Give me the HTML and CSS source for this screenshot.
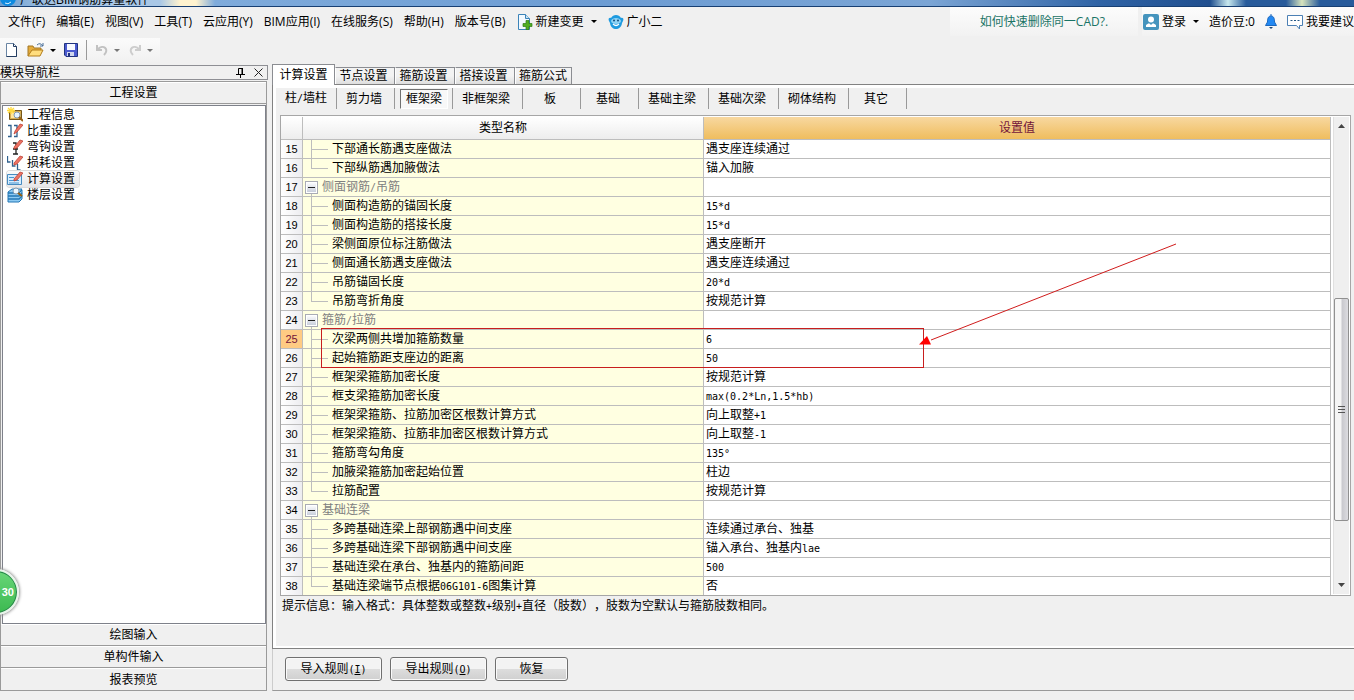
FILE: index.html
```html
<!DOCTYPE html>
<html lang="zh-CN">
<head>
<meta charset="utf-8">
<title>工程设置</title>
<link rel="stylesheet" href="styles.css">
</head>
<body>
<div class="titlebar">
  <svg class="app-icon" width="16" height="16" viewBox="0 0 16 16"><circle cx="8" cy="8" r="8" fill="#0d8ae0"/><path d="M5 13q3 2 6-1" stroke="#d5efff" fill="none"/></svg>
  <span class="title-text">广联达BIM钢筋算量软件</span>
</div>
<header class="menubar">
  <nav class="menus">
    <button>文件(F)</button><button>编辑(E)</button><button>视图(V)</button><button>工具(T)</button><button>云应用(Y)</button><button>BIM应用(I)</button><button>在线服务(S)</button><button>帮助(H)</button><button>版本号(B)</button>
    <button class="with-icon">
      <svg width="16" height="16" viewBox="0 0 16 16"><path d="M1.500.5h7l4 4v11h-11z" fill="#f2f9ff" stroke="#3b83b8"/><path d="M8.500.5v4h4" fill="#c8e2f4" stroke="#3b83b8"/><path d="M9 6.500h3v3h3v3h-3v3H9v-3H6v-3h3z" fill="#50ad22" stroke="#2d7d16" stroke-width=".7"/></svg>新建变更<i class="caret"></i>
    </button>
    <button class="with-icon">
      <svg width="16" height="16" viewBox="0 0 16 16"><path d="M3 4C1 3 0 5 1 7l1 2c1 8 11 8 12 0l1-2c1-2 0-4-2-3C11 0 5 0 3 4z" fill="#1f9be0"/><ellipse cx="8" cy="7" rx="5" ry="3" fill="#8ed3f5"/><circle cx="6" cy="6.500" r="1" fill="#124b7d"/><circle cx="10" cy="6.500" r="1" fill="#124b7d"/><path d="M5 10q3 3 6 0" fill="none" stroke="#fff" stroke-width="1.200"/></svg>广小二
    </button>
  </nav>
  <a class="tip-link" href="#">如何快速删除同一CAD?.</a>
  <div class="account">
    <button class="with-icon"><svg width="16" height="16" viewBox="0 0 16 16"><rect width="16" height="16" rx="2" fill="#4594bd"/><circle cx="8" cy="5.500" r="3" fill="#fff"/><path d="M3 13v-2q2-2 5-2t5 2v2z" fill="#fff"/><path d="M6 9l2 2 2-2" fill="#4594bd"/></svg>登录<i class="caret"></i></button>
    <span>造价豆:0</span>
    <button class="with-icon bell" aria-label="通知"><svg width="12" height="16" viewBox="0 0 12 16"><path d="M6 0v2M6 2C3 2 2.500 5 2.500 8L.5 11.500h11L9.500 8C9.500 5 9 2 6 2z" fill="#2389f3" stroke="#1d68bd"/><path d="M4 13h4l-2 2z" fill="#1a4474"/></svg></button>
    <button class="with-icon"><svg width="16" height="16" viewBox="0 0 16 16"><path d="M.5 1.500h15v10h-3v3.500l-3-3.500h-9z" fill="#fff" stroke="#4c80b4"/><path d="M3.500 6.500h2m1.500 0h2m1.500 0h2" stroke="#245785"/></svg>我要建议</button>
  </div>
</header>
<div class="toolrow"><div class="toolbar">
  <button aria-label="新建"><svg width="16" height="16" viewBox="0 0 16 16"><path d="M2.500 1.500h7l3 3v10h-10z" fill="#fff" stroke="#6984a3"/><path d="M9.500 1.500v3h3v10h-10" fill="none" stroke="#243d61"/></svg></button>
  <button aria-label="打开"><svg width="18" height="16" viewBox="0 0 18 16"><path d="M1 14V4h5l1 2h7v3" fill="#e5ac3c" stroke="#a27724"/><path d="M1 14l4-6h11l-3 6z" fill="#ffdd7e" stroke="#b27c1b"/><path d="M10 3q3-3 6 1m0-3v3h-3" fill="none" stroke="#486f99"/></svg><i class="caret"></i></button>
  <button aria-label="保存"><svg width="16" height="16" viewBox="0 0 16 16"><path d="M1.500 1.500h13v13H3l-1.500-1.500z" fill="#4b5bd0" stroke="#20337f"/><path d="M4 2h8v6H4z" fill="#f7f9ff"/><path d="M4 10h7v4H4z" fill="#cfd6ed"/><path d="M5 11h2v3H5z" fill="#203080"/></svg></button>
  <span class="divider"></span>
  <button class="undo" aria-label="撤销" disabled><svg width="16" height="16" viewBox="0 0 16 16"><path d="M3 3v5h5M4 7c5-5 12 0 6 6" fill="none" stroke="#c2c2c2" stroke-width="2"/></svg><i class="caret"></i></button>
  <button class="redo" aria-label="重做" disabled><svg width="16" height="16" viewBox="0 0 16 16"><path d="M13 3v5H8m4-1C7 2 0 7 6 13" fill="none" stroke="#cdcdcd" stroke-width="2"/></svg><i class="caret"></i></button>
</div></div>
<div class="workspace">
  <aside class="sidebar">
    <div class="dock-title"><span>模块导航栏</span>
      <button aria-label="固定"><svg width="9" height="10" viewBox="0 0 9 10"><path d="M2.500 6V.5h4V6M0 6.500h9M4.500 6v4" fill="none" stroke="#000"/><path d="M5.500 0h1.500v6h-1.500z"/></svg></button>
      <button aria-label="关闭"><svg width="9" height="9" viewBox="0 0 9 9"><path d="M.5.5l8 8m0-8l-8 8" stroke="#222"/></svg></button></div>
    <div class="modules">
      <button class="module">工程设置</button>
      <ul class="nav-list">
        <li><a href="#"><svg width="16" height="16" viewBox="0 0 16 16"><path d="M2.500 3.500h12v9h-12z" fill="#d7ae51" stroke="#765718"/><path d="M4 5h9v6H4z" fill="#ffe69b"/><path d="M4 0v7M0 3.500h8M1 1l6 5m0-5L1 6" stroke="#ffda3c" stroke-width="1.300"/><circle cx="10" cy="8" r="3" fill="#e6f5ff" stroke="#8199b1"/><path d="M12 10l4 4" stroke="#966015" stroke-width="2"/></svg><span>工程信息</span></a></li>
        <li><a href="#"><svg width="16" height="16" viewBox="0 0 16 16"><path d="M1 2.500h3v11H1M7 2.500h3v11H7" fill="none" stroke="#30618e" stroke-width="1.300"/><path d="M8 8l5-7 3 1-6 7-3 2z" fill="#ed7465" stroke="#b6372b" stroke-width=".7"/></svg><span>比重设置</span></a></li>
        <li><a href="#"><svg width="16" height="16" viewBox="0 0 16 16"><path d="M6 4h3v11M6 10h5M6 15h5" fill="none" stroke="#222" stroke-width="1.300"/><path d="M7 8l6-7 3 1-6 7-3 1z" fill="#ed7465" stroke="#b6372b" stroke-width=".7"/></svg><span>弯钩设置</span></a></li>
        <li><a href="#"><svg width="16" height="16" viewBox="0 0 16 16"><path d="M.5 1v6h3M5.500 5v6h3M10.500 9v6h3" fill="none" stroke="#30618e" stroke-width="1.300"/><path d="M7 8l6-7 3 1-6 7-3 1z" fill="#ed7465" stroke="#b6372b" stroke-width=".7"/></svg><span>损耗设置</span></a></li>
        <li><a class="current" href="#"><svg width="16" height="16" viewBox="0 0 16 16"><path d="M.5 3.500h14v10H.5z" fill="#d7edff" stroke="#478bc0"/><path d="M2 6.500h5M2 9.500h10M2 12h10" stroke="#4895cf"/><path d="M7 8l6-7 3 1-6 7-3 1z" fill="#ed7465" stroke="#b6372b" stroke-width=".7"/></svg><span>计算设置</span></a></li>
        <li><a href="#"><svg width="16" height="16" viewBox="0 0 16 16"><path d="M1 5l4-3h10l-3 4H1zM1 6v9h11l3-3V3l-3 3H1" fill="#8dcaf2" stroke="#2377b5"/><path d="M1 9h11l3-3M1 12h11l3-3" fill="none" stroke="#2377b5" stroke-width="1.300"/><circle cx="9" cy="4" r="3" fill="#edf8ff" stroke="#8199b1"/><path d="M11 6l4 3" stroke="#966015" stroke-width="2"/></svg><span>楼层设置</span></a></li>
      </ul>
      <button class="module">绘图输入</button>
      <button class="module">单构件输入</button>
      <button class="module">报表预览</button>
    </div>
  </aside>
  <main class="main">
    <div class="tabs" role="tablist"><button class="tab active" role="tab">计算设置</button><button class="tab" role="tab">节点设置</button><button class="tab" role="tab">箍筋设置</button><button class="tab" role="tab">搭接设置</button><button class="tab" role="tab">箍筋公式</button></div>
    <section class="panel">
      <div class="subtabs"><button>柱<span class="code">/</span>墙柱</button><button>剪力墙</button><button class="pressed"><span>框架梁</span></button><button class="wide">非框架梁</button><button>板</button><button>基础</button><button class="wide">基础主梁</button><button class="wide">基础次梁</button><button class="wide">砌体结构</button><button>其它</button></div>
      <div class="grid">
        <table>
          <colgroup><col class="col-no"><col class="col-name"><col></colgroup>
          <thead><tr><th></th><th>类型名称</th><th class="selected">设置值</th></tr></thead>
          <tbody>
            <tr><th>15</th><td class="leaf">下部通长筋遇支座做法</td><td>遇支座连续通过</td></tr>
            <tr><th>16</th><td class="leaf last">下部纵筋遇加腋做法</td><td>锚入加腋</td></tr>
            <tr><th>17</th><td class="group"><button class="fold" aria-label="折叠"></button>侧面钢筋<span class="code">/</span>吊筋</td><td></td></tr>
            <tr><th>18</th><td class="leaf">侧面构造筋的锚固长度</td><td><span class="code">15*d</span></td></tr>
            <tr><th>19</th><td class="leaf">侧面构造筋的搭接长度</td><td><span class="code">15*d</span></td></tr>
            <tr><th>20</th><td class="leaf">梁侧面原位标注筋做法</td><td>遇支座断开</td></tr>
            <tr><th>21</th><td class="leaf">侧面通长筋遇支座做法</td><td>遇支座连续通过</td></tr>
            <tr><th>22</th><td class="leaf">吊筋锚固长度</td><td><span class="code">20*d</span></td></tr>
            <tr><th>23</th><td class="leaf last">吊筋弯折角度</td><td>按规范计算</td></tr>
            <tr><th>24</th><td class="group"><button class="fold" aria-label="折叠"></button>箍筋<span class="code">/</span>拉筋</td><td></td></tr>
            <tr><th class="selected">25</th><td class="leaf">次梁两侧共增加箍筋数量</td><td><span class="code">6</span></td></tr>
            <tr><th>26</th><td class="leaf">起始箍筋距支座边的距离</td><td><span class="code">50</span></td></tr>
            <tr><th>27</th><td class="leaf">框架梁箍筋加密长度</td><td>按规范计算</td></tr>
            <tr><th>28</th><td class="leaf">框支梁箍筋加密长度</td><td><span class="code">max(0.2*Ln,1.5*hb)</span></td></tr>
            <tr><th>29</th><td class="leaf">框架梁箍筋、拉筋加密区根数计算方式</td><td>向上取整<span class="code">+1</span></td></tr>
            <tr><th>30</th><td class="leaf">框架梁箍筋、拉筋非加密区根数计算方式</td><td>向上取整<span class="code">-1</span></td></tr>
            <tr><th>31</th><td class="leaf">箍筋弯勾角度</td><td><span class="code">135°</span></td></tr>
            <tr><th>32</th><td class="leaf">加腋梁箍筋加密起始位置</td><td>柱边</td></tr>
            <tr><th>33</th><td class="leaf last">拉筋配置</td><td>按规范计算</td></tr>
            <tr><th>34</th><td class="group"><button class="fold" aria-label="折叠"></button>基础连梁</td><td></td></tr>
            <tr><th>35</th><td class="leaf">多跨基础连梁上部钢筋遇中间支座</td><td>连续通过承台、独基</td></tr>
            <tr><th>36</th><td class="leaf">多跨基础连梁下部钢筋遇中间支座</td><td>锚入承台、独基内<span class="code">lae</span></td></tr>
            <tr><th>37</th><td class="leaf">基础连梁在承台、独基内的箍筋间距</td><td><span class="code">500</span></td></tr>
            <tr><th>38</th><td class="leaf last">基础连梁端节点根据<span class="code">06G101-6</span>图集计算</td><td>否</td></tr>
          </tbody>
        </table>
        <div class="scrollbar">
          <svg width="7" height="4" viewBox="0 0 7 4"><path d="M0 4l3.500-4L7 4z" fill="#444"/></svg>
          <div class="track"><div class="thumb"><svg width="7" height="8" viewBox="0 0 7 8"><path d="M0 .5h7M0 3.500h7M0 6.500h7" stroke="#555"/></svg></div></div>
          <svg width="7" height="4" viewBox="0 0 7 4"><path d="M0 0h7L3.500 4z" fill="#444"/></svg>
        </div>
        <svg class="annotation" width="900" height="260" viewBox="0 0 900 260"><rect x="40.500" y="212.500" width="602" height="39" fill="none" stroke="#c81e1e" shape-rendering="crispEdges"/><path d="M895 128L650 224" stroke="#d01c1c"/><path d="M638 228.500l8-8.500 4 8.500z" fill="#f00"/></svg>
      </div>
      <p class="hint">提示信息：输入格式：具体整数或整数<span class="code">+</span>级别<span class="code">+</span>直径（肢数），肢数为空默认与箍筋肢数相同。</p>
    </section>
    <footer class="actions"><button>导入规则<span class="code">(<u>I</u>)</span></button><button>导出规则<span class="code">(<u>O</u>)</span></button><button class="short">恢复</button></footer>
  </main>
</div>
<div class="float-badge">30</div>
</body>
</html>
```
FILE: styles.css
```css
* { box-sizing: border-box; }
html { height: 100%; }
body {
  margin: 0;
  min-height: 100%;
  display: flex;
  flex-direction: column;
  position: relative;
  overflow: hidden;
  background: #f0f0f0;
  color: #000;
  font: 12px/16px "Liberation Sans", "Noto Sans CJK SC", sans-serif;
}
button {
  margin: 0;
  padding: 0;
  border: 0;
  background: none;
  color: inherit;
  font: inherit;
  white-space: nowrap;
}
svg { display: block; flex: none; }
.code { font: 10px/16px "DejaVu Sans Mono", monospace; }

.titlebar {
  height: 7px;
  flex: none;
  display: flex;
  align-items: flex-end;
  gap: 4px;
  overflow: hidden;
  border-bottom: 1px solid #173f73;
  background: linear-gradient(90deg, #6f9fd0 0, #a9c7e6 60px, #a9c7e6 160px, #fff3cf 180px, #fff3cf 196px, #7fabdb 215px, #6c9cd3 600px, #7ba5d5 930px, #2f63a5 1100px, #204f8f 1210px, #c8e8ee 1228px, #285b9b 1246px, #285b9b 1286px, #d7e4bd 1302px, #285b9b 1320px);
}
.title-text { font-size: 12px; line-height: 12px; }

.menubar {
  height: 29px;
  flex: none;
  display: flex;
  align-items: center;
  font-family: "Open Sans", "Noto Sans CJK SC", sans-serif;
}
.menus { display: flex; gap: 11px; padding-left: 8px; margin-right: auto; }
.with-icon { display: flex; align-items: center; gap: 3px; }
.caret {
  border: 3px solid transparent;
  border-top-color: #000;
  border-bottom: 0;
  margin-left: 4px;
}
.tip-link {
  align-self: stretch;
  display: flex;
  align-items: center;
  justify-content: center;
  width: 188px;
  margin-right: 4px;
  background: linear-gradient(#fcfcfc, #f2f2f2);
  color: #1a7466;
  text-decoration: none;
}
.account {
  align-self: stretch;
  display: flex;
  align-items: center;
  gap: 10px;
  padding-left: 1px;
  white-space: nowrap;
  background: linear-gradient(#fcfcfc, #f2f2f2);
}

.toolrow { flex: none; display: flex; padding-top: 2px; height: 28px; }
.toolbar {
  width: 160px;
  height: 24px;
  display: flex;
  align-items: center;
  padding-left: 4px;
  gap: 7px;
  background: linear-gradient(#fbfbfb, #f1f1f1);
}
.toolbar button { display: flex; align-items: center; gap: 1px; }
.toolbar .undo, .toolbar .redo { gap: 0; }
.toolbar button:disabled .caret { border-top-color: #777; }
.divider { width: 1px; height: 20px; background: #999; }

.workspace { flex: 1; display: flex; gap: 5px; padding-bottom: 9px; }
.sidebar { width: 268px; flex: none; display: flex; flex-direction: column; padding-top: 1px; gap: 1px; }
.dock-title {
  display: flex;
  align-items: center;
  height: 15px;
  border: 1px solid #8e8f94;
  border-left: 0;
  padding-right: 4px;
  gap: 9px;
}
.dock-title span { margin-right: auto; font-size: 12px; }
.modules {
  flex: 1;
  display: flex;
  flex-direction: column;
  width: 267px;
  border: 1px solid #9a9a9a;
}
.module { height: 22px; border-top: 1px solid #fff; border-bottom: 1px solid #9a9a9a; }
.module:last-child { border-bottom: 0; }
.nav-list {
  flex: 1;
  margin: 1px 0 0 1px;
  padding: 1px 4px;
  list-style: none;
  background: #fff;
  border: 1px solid #7e818a;
}
.nav-list a { display: inline-flex; gap: 4px; height: 16px; color: #000; text-decoration: none; line-height: 16px; padding-right: 4px; }
.nav-list li { height: 16px; }
.nav-list .current { border-radius: 3px; background: linear-gradient(#fafafa, #e6e6e8); box-shadow: 0 0 0 1px #dcdcdc; }

.main { flex: 1; min-width: 0; display: flex; flex-direction: column; margin-left: -1px; }
.tabs { display: flex; align-items: flex-end; height: 20px; }
.tab {
  width: 60px;
  height: 17px;
  padding-right: 3px;
  border: 1px solid #8b8d92;
  border-left-color: #fff;
  border-bottom: 0;
  background: linear-gradient(#f3f3f3 50%, #dedede);
}
.tab.active { position: relative; width: 63px; height: 21px; margin-bottom: -1px; padding-right: 0; border-left-color: #8b8d92; background: #fff; z-index: 1; }
.tab:last-child { width: 57px; padding-right: 1px; }
.panel {
  flex: 1;
  border: 1px solid #828282;
  border-right: 0;
  padding: 3px 3px 0 6px;
  box-shadow: inset 3px 3px #fff, inset 0 -2px #fff;
}
.subtabs { display: flex; height: 21px; }
.subtabs button { width: 58px; padding: 0 3px 0 0; border-right: 1px solid #999; }
.subtabs .wide { width: 70px; }
.subtabs .pressed { padding: 0 4px 0 5px; }
.pressed span {
  display: block;
  height: 20px;
  line-height: 18px;
  border: 1px solid #fff;
  border-top-color: #707070;
  border-left-color: #707070;
  background: #f8f8f8;
}
.grid {
  position: relative;
  display: flex;
  margin: 6px 0 0 1px;
  padding: 1px 0 0 0;
  border: 1px solid #a6a6a6;
  background: #fff;
}
table { flex: 1; min-width: 0; table-layout: fixed; border-collapse: separate; border-spacing: 0; }
.col-no { width: 22px; }
.col-name { width: 401px; }
th, td {
  height: 19px;
  padding: 0 2px;
  border-right: 1px solid #bdbdbd;
  border-bottom: 1px solid #bdbdbd;
  font-weight: 400;
  line-height: 18px;
  text-align: left;
  white-space: nowrap;
  overflow: hidden;
}
thead th { height: 23px; text-align: center; background: linear-gradient(#fff, #ededed); }
thead .selected { background: linear-gradient(#f8d8a0, #efbd5e); color: #73143a; }
tbody th { text-align: center; padding: 0; font-size: 11px; background: linear-gradient(90deg, #fff, #ededf0); }
tbody .selected { background: #ffcb83; color: #73143a; }
tbody tr:last-child > * { border-bottom: 0; height: 18px; }
.leaf {
  padding-left: 29px;
  background:
    linear-gradient(#bdbdbd, #bdbdbd) 8px 0 / 1px 100% no-repeat,
    linear-gradient(#bdbdbd, #bdbdbd) 8px 9px / 17px 1px no-repeat,
    #ffffe1;
}
.leaf.last { background-size: 1px 9px, 17px 1px, auto; }
.group { background: linear-gradient(#bdbdbd, #bdbdbd) 8px 14px / 1px 4px no-repeat, #ffffe1; color: #808080; }
.fold {
  width: 13px;
  height: 13px;
  margin-right: 4px;
  vertical-align: middle;
  border: 1px solid #a9abb5;
  box-shadow: inset 0 0 0 1px #fff;
  background: linear-gradient(#222, #222) center / 7px 1px no-repeat, linear-gradient(#fff, #c4cad8);
}

.scrollbar {
  width: 16px;
  margin: 0 1px 1px 2px;
  display: flex;
  flex-direction: column;
  align-items: center;
  gap: 7px;
  padding: 7px 0;
  background: #efefef;
  border-left: 1px solid #e0e0e0;
}
.track { flex: 1; align-self: stretch; padding-top: 163px; }
.thumb {
  display: flex;
  align-items: center;
  justify-content: center;
  height: 223px;
  border: 1px solid #909090;
  border-radius: 2px;
  background: linear-gradient(90deg, #f5f5f5 45%, #c9c9ce 55%, #dcdce0);
}
.annotation { position: absolute; left: 0; top: 0; pointer-events: none; }
.hint { margin: 1px 0 0 3px; line-height: 18px; text-spacing-trim: space-all; }
.actions {
  height: 42px;
  display: flex;
  gap: 8px;
  padding: 8px 12px;
  border-left: 1px solid #ccc;
  border-bottom: 1px solid #999;
}
.actions button {
  width: 97px;
  height: 24px;
  border: 1px solid #707070;
  border-radius: 3px;
  background: linear-gradient(#f3f3f3 50%, #dddddd 50%, #d0d0d0);
  box-shadow: inset 0 0 0 1px #fafafa;
}
.actions .short { width: 73px; }
.float-badge {
  position: absolute;
  left: -27px;
  top: 569px;
  width: 46px;
  height: 46px;
  padding-right: 3px;
  border: 2px solid #e8f3ea;
  border-radius: 50%;
  background: linear-gradient(#68d678, #3cb950);
  box-shadow: inset 0 0 0 1px #25824a, 0 0 3px 1px #999;
  color: #fff;
  font-size: 11px;
  font-weight: 700;
  line-height: 42px;
  text-align: right;
}
```
